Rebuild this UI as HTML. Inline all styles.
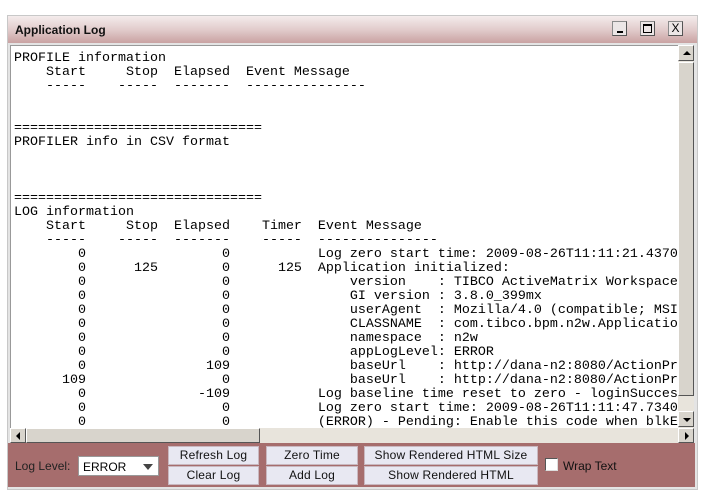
<!DOCTYPE html>
<html><head><style>
body{margin:0;width:706px;height:502px;background:#fff;position:relative;overflow:hidden;font-family:"Liberation Sans",sans-serif}
.a{position:absolute;box-sizing:border-box}
.win{left:7px;top:15px;width:691px;height:475px;border:1px solid #c8c8c8;background:#e4e4e4}
.title{left:8px;top:16px;width:689px;height:27px;background:linear-gradient(#f4ecec,#e2cccc 50%,#c9a2a2);font-weight:bold;font-size:12px;color:#111;padding:7px 0 0 7px}
.tb{top:21px;width:15px;height:15px;border:1px solid #8a8a8a;background:#ece6e6;border-right-color:#555;border-bottom-color:#555}
.txt{left:10px;top:45px;width:668px;height:383px;background:#fff;overflow:hidden;border-left:1px solid #999;border-top:1px solid #999}
pre{margin:0;position:absolute;left:3px;top:6px;font-family:"Liberation Mono",monospace;font-size:13.33px;line-height:14px;color:#000;white-space:pre}
.vs{left:678px;top:45px;width:16px;height:383px;background:#e8e4dc}
.hs{left:10px;top:428px;width:684px;height:15px;background:#e8e4dc}
.sb{background:#d8d4cc;border:1px solid #fff;border-right-color:#555;border-bottom-color:#555}
.panel{left:8px;top:443px;width:687px;height:44px;background:#a66d6d}
.btn{height:19px;background:#e8e8f2;border:1px solid #c9b8c0;font-size:12px;color:#111;text-align:center;line-height:17px;letter-spacing:0.2px}
</style></head><body>
<div class="a win"></div>
<div class="a title">Application Log</div>
<div class="a tb" style="left:612px"><div class="a" style="left:4px;top:9px;width:6px;height:2px;background:#000"></div></div>
<div class="a tb" style="left:640px"><div class="a" style="left:2px;top:2px;width:9px;height:9px;border:1px solid #000;border-top-width:2px"></div></div>
<div class="a tb" style="left:668px;font-size:12px;text-align:center;line-height:13px;font-weight:normal">X</div>
<div class="a txt"><pre>PROFILE information
    Start     Stop  Elapsed  Event Message
    -----    -----  -------  ---------------


===============================
PROFILER info in CSV format



===============================
LOG information
    Start     Stop  Elapsed    Timer  Event Message
    -----    -----  -------    -----  ---------------
        0                 0           Log zero start time: 2009-08-26T11:11:21.4370
        0      125        0      125  Application initialized:
        0                 0               version    : TIBCO ActiveMatrix Workspace
        0                 0               GI version : 3.8.0_399mx
        0                 0               userAgent  : Mozilla/4.0 (compatible; MSIE
        0                 0               CLASSNAME  : com.tibco.bpm.n2w.Application
        0                 0               namespace  : n2w
        0                 0               appLogLevel: ERROR
        0               109               baseUrl    : http://dana-n2:8080/ActionPr
      109                 0               baseUrl    : http://dana-n2:8080/ActionPr
        0              -109           Log baseline time reset to zero - loginSucces
        0                 0           Log zero start time: 2009-08-26T11:11:47.7340
        0                 0           (ERROR) - Pending: Enable this code when blkE</pre></div>
<div class="a vs">
<div class="a sb" style="left:0;top:0;width:16px;height:16px"><div class="a" style="left:4px;top:5px;border:4px solid transparent;border-bottom:4px solid #000;border-top:0"></div></div>
<div class="a sb" style="left:0;top:17px;width:16px;height:334px"></div>
<div class="a sb" style="left:0;top:366px;width:16px;height:16px"><div class="a" style="left:4px;top:6px;border:4px solid transparent;border-top:4px solid #000;border-bottom:0"></div></div>
</div>
<div class="a hs">
<div class="a sb" style="left:0;top:0;width:16px;height:15px"><div class="a" style="left:5px;top:3px;border:4px solid transparent;border-right:4px solid #000;border-left:0"></div></div>
<div class="a sb" style="left:16px;top:0;width:234px;height:15px"></div>
<div class="a sb" style="left:668px;top:0;width:16px;height:15px"><div class="a" style="left:6px;top:3px;border:4px solid transparent;border-left:4px solid #000;border-right:0"></div></div>
</div>
<div class="a panel"></div>
<div class="a" style="left:15px;top:459px;font-size:12px;color:#222">Log Level:</div>
<div class="a" style="left:78px;top:456px;width:81px;height:20px;background:#fff;border:1px solid #999;font-size:12px;padding:3px 0 0 4px">ERROR<div class="a" style="left:64px;top:7px;border:5px solid transparent;border-top:6px solid #444;border-bottom:0"></div></div>
<div class="a btn" style="left:168px;top:446px;width:91px">Refresh Log</div>
<div class="a btn" style="left:168px;top:466px;width:91px">Clear Log</div>
<div class="a btn" style="left:266px;top:446px;width:92px">Zero Time</div>
<div class="a btn" style="left:266px;top:466px;width:92px">Add Log</div>
<div class="a btn" style="left:364px;top:446px;width:174px">Show Rendered HTML Size</div>
<div class="a btn" style="left:364px;top:466px;width:174px">Show Rendered HTML</div>
<div class="a" style="left:545px;top:458px;width:13px;height:13px;background:#fff;border:1px solid #555;border-right-color:#ddd;border-bottom-color:#ddd"></div>
<div class="a" style="left:563px;top:459px;font-size:12px;color:#111">Wrap Text</div>
</body></html>
